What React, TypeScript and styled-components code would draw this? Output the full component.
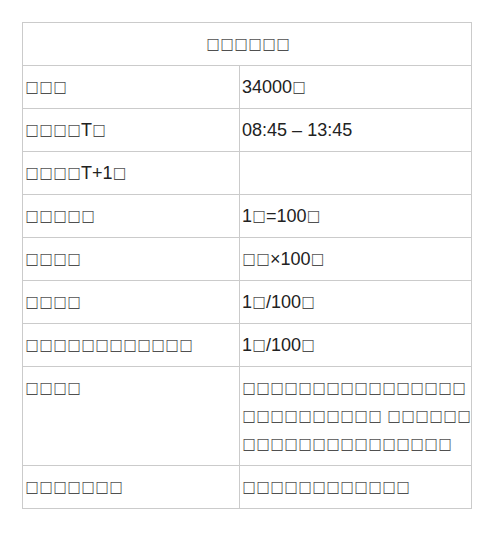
import React from "react";
import styled, { createGlobalStyle } from "styled-components";

const GlobalStyle = createGlobalStyle`
  html, body {
    margin: 0;
    padding: 0;
    background: #fff;
  }
  body {
    font-family: "Liberation Sans", Arial, sans-serif;
  }
`;

const Page = styled.div`
  padding: 22px 0 0 22px;
`;

const Table = styled.table`
  width: 449px;
  border-collapse: collapse;
  table-layout: fixed;
  font-size: 18px;
  color: #222;
`;

const Cell = styled.td<{ $center?: boolean }>`
  border: 1px solid #cbcbcb;
  padding: 7px 0 7px 2px;
  height: 28px;
  line-height: 28px;
  vertical-align: top;
  text-align: ${(p) => (p.$center ? "center" : "left")};
  word-break: break-all;
`;

// glyphs the page could not draw show up as empty boxes, one per character
const Tofu = styled.span`
  display: inline-block;
  width: 14px;
  text-align: center;
  font-family: "DejaVu Sans", sans-serif;
  font-size: 14px;
  line-height: 1;
  vertical-align: 2px;
  color: #505050;
  transform: scaleY(1.15);
`;

function Txt({ s }: { s: string }) {
  return (
    <>
      {Array.from(s).map((c, i) =>
        c === "□" ? <Tofu key={i}>□</Tofu> : <React.Fragment key={i}>{c}</React.Fragment>
      )}
    </>
  );
}

const rows: [string, string][] = [
  ["□□□", "34000□"],
  ["□□□□T□", "08:45 – 13:45"],
  ["□□□□T+1□", ""],
  ["□□□□□", "1□=100□"],
  ["□□□□", "□□×100□"],
  ["□□□□", "1□/100□"],
  ["□□□□□□□□□□□□", "1□/100□"],
  [
    "□□□□",
    "□□□□□□□□□□□□□□□□□□□□□□□□□□ □□□□□□□□□□□□□□□□□□□□□",
  ],
  ["□□□□□□□", "□□□□□□□□□□□□"],
];

export default function App() {
  return (
    <Page>
      <GlobalStyle />
      <Table>
        <colgroup>
          <col style={{ width: 217 }} />
          <col style={{ width: 232 }} />
        </colgroup>
        <tbody>
          <tr>
            <Cell colSpan={2} $center>
              <Txt s="□□□□□□" />
            </Cell>
          </tr>
          {rows.map(([k, v], i) => (
            <tr key={i}>
              <Cell>
                <Txt s={k} />
              </Cell>
              <Cell>
                <Txt s={v} />
              </Cell>
            </tr>
          ))}
        </tbody>
      </Table>
    </Page>
  );
}
